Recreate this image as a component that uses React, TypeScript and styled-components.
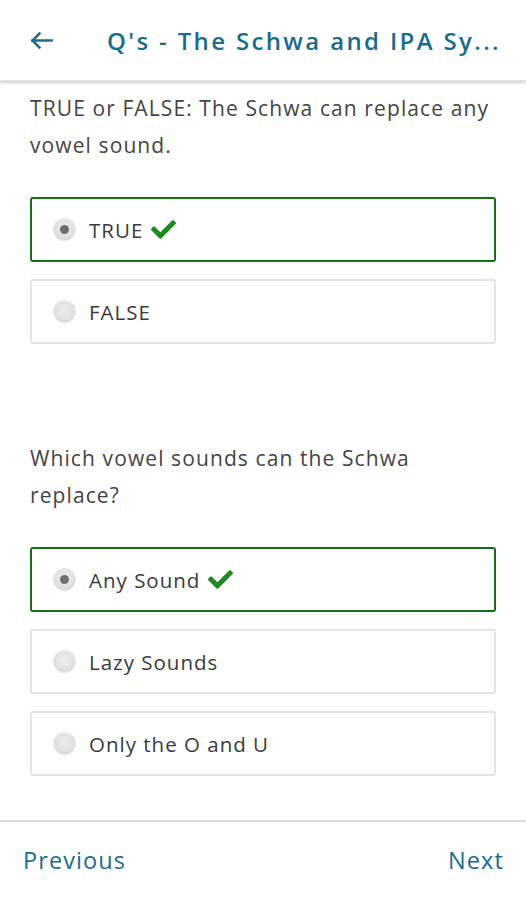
import React from "react";
import styled, { createGlobalStyle } from "styled-components";
import { FaCheck } from "react-icons/fa";

const Global = createGlobalStyle`
  html, body { margin: 0; padding: 0; background: #fff; }
  body { font-family: "Open Sans", "Noto Sans", sans-serif; }
  * { box-sizing: border-box; }
`;

const Page = styled.div`
  width: 526px;
  height: 900px;
  display: flex;
  flex-direction: column;
  background: #fff;
  overflow: hidden;
`;

const Header = styled.header`
  height: 81px;
  flex: 0 0 auto;
  display: flex;
  align-items: center;
  padding: 0 10px 0 28px;
  gap: 52px;
  background: #fff;
  box-shadow: 0 2px 3px rgba(0, 0, 0, 0.18);
  position: relative;
  z-index: 1;
  border-bottom: 1px solid #e2e2e2;
`;

const BackIcon = styled.svg`
  width: 27px;
  height: 27px;
  flex: 0 0 auto;
`;

const Title = styled.h1`
  margin: 0;
  font-size: 24px;
  font-weight: 600;
  letter-spacing: 2.35px;
  color: #1a6c8b;
  white-space: nowrap;
  min-width: 0;
  flex: 1;
`;

const Content = styled.main`
  flex: 1;
  padding: 9px 28px 0 30px;
  display: flex;
  flex-direction: column;
`;

const Question = styled.section<{ $gapTop?: number }>`
  margin-top: ${(p) => p.$gapTop ?? 0}px;
  display: flex;
  flex-direction: column;
`;

const Prompt = styled.p`
  margin: 0 0 33px 0;
  font-size: 21px;
  letter-spacing: 1.1px;
  line-height: 37px;
  color: #444;
`;

const Options = styled.div`
  display: flex;
  flex-direction: column;
  gap: 17px;
`;

const Option = styled.div<{ $correct?: boolean }>`
  height: 65px;
  margin-right: 2px;
  display: flex;
  align-items: center;
  padding-left: 22px;
  border-radius: 3px;
  border: ${(p) => (p.$correct ? "2px solid #1a6b1a" : "2px solid #e4e4e4")};
  background: #fff;
`;

const Radio = styled.span<{ $checked?: boolean }>`
  width: 21px;
  height: 21px;
  border-radius: 50%;
  flex: 0 0 auto;
  background: radial-gradient(circle at 50% 40%, #ececec 0%, #d9d9d9 100%);
  box-shadow: inset 0 -1px 1px rgba(0, 0, 0, 0.06), 0 0 0 1px #e6e6e6;
  display: flex;
  align-items: center;
  justify-content: center;
  &::after {
    content: "";
    width: 9px;
    height: 9px;
    border-radius: 50%;
    background: #6e6e6e;
    display: ${(p) => (p.$checked ? "block" : "none")};
  }
`;

const Label = styled.span`
  margin-left: 14px;
  font-size: 20.5px;
  letter-spacing: 1px;
  color: #3a3a3a;
  display: flex;
  align-items: center;
  gap: 8px;
`;

const Check = styled(FaCheck)`
  color: #1f8a22;
  width: 25px;
  height: 25px;
`;

const Footer = styled.footer`
  flex: 0 0 auto;
  height: 80px;
  border-top: 2px solid #dcdcdc;
  display: flex;
  align-items: center;
  justify-content: space-between;
  padding: 0 22px 2px 23px;
`;

const NavLink = styled.span`
  font-size: 23.5px;
  letter-spacing: 1.1px;
  color: #1a6c8b;
`;

type Opt = { label: string; correct?: boolean };

const questions: { prompt: string; options: Opt[] }[] = [
  {
    prompt: "TRUE or FALSE: The Schwa can replace any vowel sound.",
    options: [{ label: "TRUE", correct: true }, { label: "FALSE" }],
  },
  {
    prompt: "Which vowel sounds can the Schwa replace?",
    options: [
      { label: "Any Sound", correct: true },
      { label: "Lazy Sounds" },
      { label: "Only the O and U" },
    ],
  },
];

export default function App() {
  return (
    <Page>
      <Global />
      <Header>
        <BackIcon viewBox="0 0 24 24" fill="none" stroke="#1a6c8b" strokeWidth="2.2" strokeLinecap="square">
          <path d="M21 12H4" />
          <path d="M11 5l-7 7 7 7" strokeLinecap="butt" />
        </BackIcon>
        <Title>Q's - The Schwa and IPA Sy...</Title>
      </Header>
      <Content>
        {questions.map((q, i) => (
          <Question key={i} $gapTop={i === 0 ? 0 : 96}>
            <Prompt>{q.prompt}</Prompt>
            <Options>
              {q.options.map((o) => (
                <Option key={o.label} $correct={o.correct}>
                  <Radio $checked={o.correct} />
                  <Label>
                    {o.label}
                    {o.correct && <Check />}
                  </Label>
                </Option>
              ))}
            </Options>
          </Question>
        ))}
      </Content>
      <Footer>
        <NavLink>Previous</NavLink>
        <NavLink>Next</NavLink>
      </Footer>
    </Page>
  );
}
